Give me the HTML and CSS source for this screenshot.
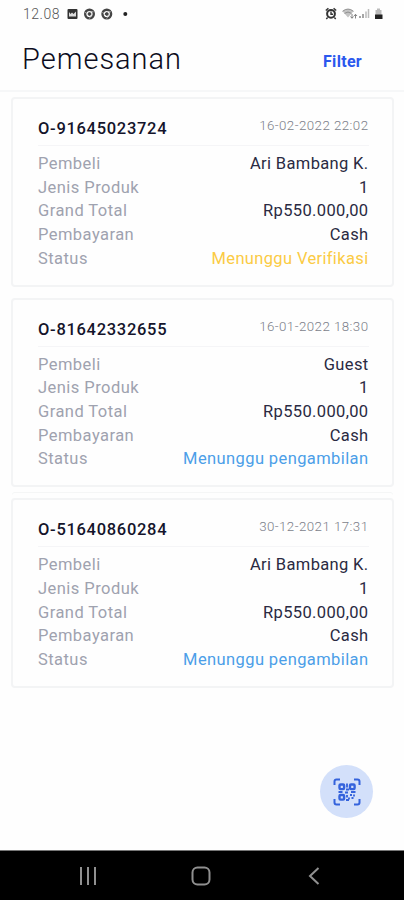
FILE: index.html
```html
<!DOCTYPE html>
<html lang="id">
<head>
    <meta charset="UTF-8">
    <meta name="viewport" content="width=device-width, initial-scale=1.0">
    <title>Pemesanan</title>
    <link rel="stylesheet" href="styles.css">
</head>
<body>
    <div class="statusbar">
        <span class="time">12.08</span>
        <svg class="notif" width="64" height="12" viewBox="0 0 64 12">
            <rect x="0.5" y="1" width="10" height="10" rx="1" fill="#333"/>
            <path d="M2 8.500V4l1.500 2L5 4.500 6.500 6 9 3.500v5z" fill="#ddd"/>
            <g fill="none" stroke="#444">
                <circle cx="22.500" cy="6" r="4.300" stroke-width="2.400"/>
                <circle cx="22.500" cy="6" r="1.400" fill="#444"/>
                <path d="M22.500 3.800h4M20.500 7l-2.200-3M24.400 7l-2 3.600" stroke="#ccc" stroke-width="0.8"/>
                <circle cx="39.800" cy="6" r="4.300" stroke-width="2.400"/>
                <circle cx="39.800" cy="6" r="1.400" fill="#444"/>
                <path d="M39.800 3.800h4M37.800 7l-2.200-3M41.700 7l-2 3.600" stroke="#ccc" stroke-width="0.8"/>
            </g>
            <circle cx="58.300" cy="6" r="2" fill="#222"/>
        </svg>
        <svg class="signals" width="60" height="13" viewBox="0 0 60 13">
            <circle cx="7" cy="6.800" r="3.900" fill="none" stroke="#333" stroke-width="2"/>
            <path d="M7 4.500v2.700h2M1.800 3.600L4.400 1.200M12.200 3.600L9.600 1.200M3.600 10.500L2.300 12M10.400 10.500l1.300 1.500" fill="none" stroke="#333" stroke-width="1.400"/>
            <path d="M18.500 4.300Q24-.2 29.500 4.300L24 10.500z" fill="#c4c4c4"/>
            <path d="M18.500 4.300Q24-.2 29.500 4.300M20.500 6.400Q24 3.600 27.500 6.400" fill="none" stroke="#888" stroke-width="0.9"/>
            <path d="M28 7v4M26.500 9.500l1.500 1.800 1.500-1.800M31.500 11.500v-4M30 9l1.500-1.700L33 9" fill="none" stroke="#777" stroke-width="0.9"/>
            <path d="M36 11V9M39 11V7" stroke="#888" stroke-width="1.500"/>
            <path d="M42 11V4.500M44.500 11V2" stroke="#bbb" stroke-width="1.500"/>
            <path d="M51.500 3H53V1.500h3V3h1.500v9h-6z" fill="#bbb"/>
            <path d="M51 7.500h7.500V12H51z" fill="#222"/>
        </svg>
    </div>

    <header class="header">
        <h1>Pemesanan</h1>
        <a class="filter">Filter</a>
    </header>

    <main class="orders">
        <section class="card">
            <div class="card-head">
                <h2>O-91645023724</h2>
                <time>16-02-2022 22:02</time>
            </div>
            <dl>
                <dt>Pembeli</dt><dd>Ari Bambang K.</dd>
                <dt>Jenis Produk</dt><dd>1</dd>
                <dt>Grand Total</dt><dd>Rp550.000,00</dd>
                <dt>Pembayaran</dt><dd>Cash</dd>
                <dt>Status</dt><dd class="verify">Menunggu Verifikasi</dd>
            </dl>
        </section>
        <section class="card">
            <div class="card-head">
                <h2>O-81642332655</h2>
                <time>16-01-2022 18:30</time>
            </div>
            <dl>
                <dt>Pembeli</dt><dd>Guest</dd>
                <dt>Jenis Produk</dt><dd>1</dd>
                <dt>Grand Total</dt><dd>Rp550.000,00</dd>
                <dt>Pembayaran</dt><dd>Cash</dd>
                <dt>Status</dt><dd class="pickup">Menunggu pengambilan</dd>
            </dl>
        </section>
        <section class="card raised">
            <div class="card-head">
                <h2>O-51640860284</h2>
                <time>30-12-2021 17:31</time>
            </div>
            <dl>
                <dt>Pembeli</dt><dd>Ari Bambang K.</dd>
                <dt>Jenis Produk</dt><dd>1</dd>
                <dt>Grand Total</dt><dd>Rp550.000,00</dd>
                <dt>Pembayaran</dt><dd>Cash</dd>
                <dt>Status</dt><dd class="pickup">Menunggu pengambilan</dd>
            </dl>
        </section>
    </main>

    <button class="scan" aria-label="Scan">
        <svg width="28" height="28" viewBox="0 0 28 28" fill="none" stroke="#3563dc">
            <path d="M1.500 7V3.500q0-2 2-2H7M21 1.500h3.500q2 0 2 2V7M26.500 21v3.500q0 2-2 2H21M7 26.500H3.500q-2 0-2-2V21" stroke-width="2"/>
            <g stroke-width="2.400">
                <rect x="6.500" y="6.500" width="4.600" height="4.600" rx="1"/>
                <rect x="17" y="6.500" width="4.600" height="4.600" rx="1"/>
                <rect x="6.500" y="17" width="4.600" height="4.600" rx="1"/>
            </g>
            <path d="M14 5.500v4M13 11.500h3M5.500 14h4M12 14.500h3M18 14h4.500M14 17v2.500M17 17h2M21 16.500v2M18.500 20h2M13 22h3M16 19.500v2" stroke-width="1.800"/>
        </svg>
    </button>

    <nav class="navbar">
        <svg width="18" height="18" viewBox="0 0 18 18">
            <path d="M2 0v18M9 0v18M16 0v18" stroke="#909090" stroke-width="2"/>
        </svg>
        <svg class="home" width="20" height="20" viewBox="0 0 20 20">
            <rect x="1.500" y="1.500" width="17" height="17" rx="5" fill="none" stroke="#909090" stroke-width="2"/>
        </svg>
        <svg width="12" height="18" viewBox="0 0 12 18">
            <path d="M10.500 1L2 9l8.500 8" fill="none" stroke="#909090" stroke-width="2"/>
        </svg>
    </nav>
</body>
</html>
```
FILE: styles.css
```css
* {
    box-sizing: border-box;
    margin: 0;
    padding: 0;
}
body {
    display: flex;
    flex-direction: column;
    position: relative;
    height: 900px;
    font-family: Roboto, sans-serif;
    background-color: #fefefe;
    color: #2a2a42;
}
.statusbar {
    display: flex;
    align-items: center;
    height: 27px;
    padding: 0 20px 0 23px;
}
.time {
    width: 44px;
    font-size: 14px;
    font-weight: 300;
    letter-spacing: 0.5px;
    color: #555;
}
.signals {
    margin-left: auto;
}
.header {
    display: flex;
    align-items: center;
    justify-content: space-between;
    height: 65px;
    padding: 1px 42px 0 22px;
    border-bottom: 2px solid #f6f7f8;
}
h1 {
    font-size: 29px;
    font-weight: 300;
    letter-spacing: 1px;
    color: #0c0c20;
}
.filter {
    padding-top: 5px;
    font-size: 16px;
    font-weight: 700;
    letter-spacing: 0.3px;
    color: #2b58ee;
}
.orders {
    display: flex;
    flex-direction: column;
    gap: 11px;
    padding: 5px 10px 0 11px;
}
.card {
    height: 189.700px;
    padding: 18px 23.500px 0 25px;
    border: 2px solid #f3f4f5;
    border-radius: 4px;
}
.raised {
    box-shadow: 0 -6px 0 -1px #fefefe, 0 -7px 0 -1px #f5f6f6;
}
.card-head {
    display: flex;
    justify-content: space-between;
    height: 29px;
    border-bottom: 1px solid #f5f5f7;
}
h2 {
    font-size: 16.500px;
    font-weight: 500;
    line-height: 24px;
    letter-spacing: 0.7px;
    color: #14142b;
}
time {
    font-size: 13.300px;
    font-weight: 300;
    line-height: 18px;
    letter-spacing: 0.450px;
    color: #7c7f8a;
}
dl {
    display: grid;
    grid-template-columns: auto 1fr;
    grid-auto-rows: 23.700px;
    padding-top: 6px;
    font-size: 16.500px;
    line-height: 23.700px;
    letter-spacing: 0.350px;
}
dt {
    letter-spacing: 0.450px;
    color: #9fa2af;
}
dd {
    text-align: right;
}
.verify {
    color: #fbcb44;
}
.pickup {
    letter-spacing: 0.4px;
    color: #4c9ee8;
}
.scan {
    display: flex;
    align-items: center;
    justify-content: center;
    position: absolute;
    left: 320px;
    top: 765px;
    width: 53px;
    height: 53px;
    border: none;
    border-radius: 50%;
    background-color: #d3e0fa;
}
.navbar {
    display: flex;
    align-items: center;
    justify-content: space-between;
    height: 50px;
    margin-top: auto;
    padding: 1px 84px 0 79px;
    border-top: 1px solid #777;
    background-color: #000;
}
.home {
    margin-right: 4px;
}
```
